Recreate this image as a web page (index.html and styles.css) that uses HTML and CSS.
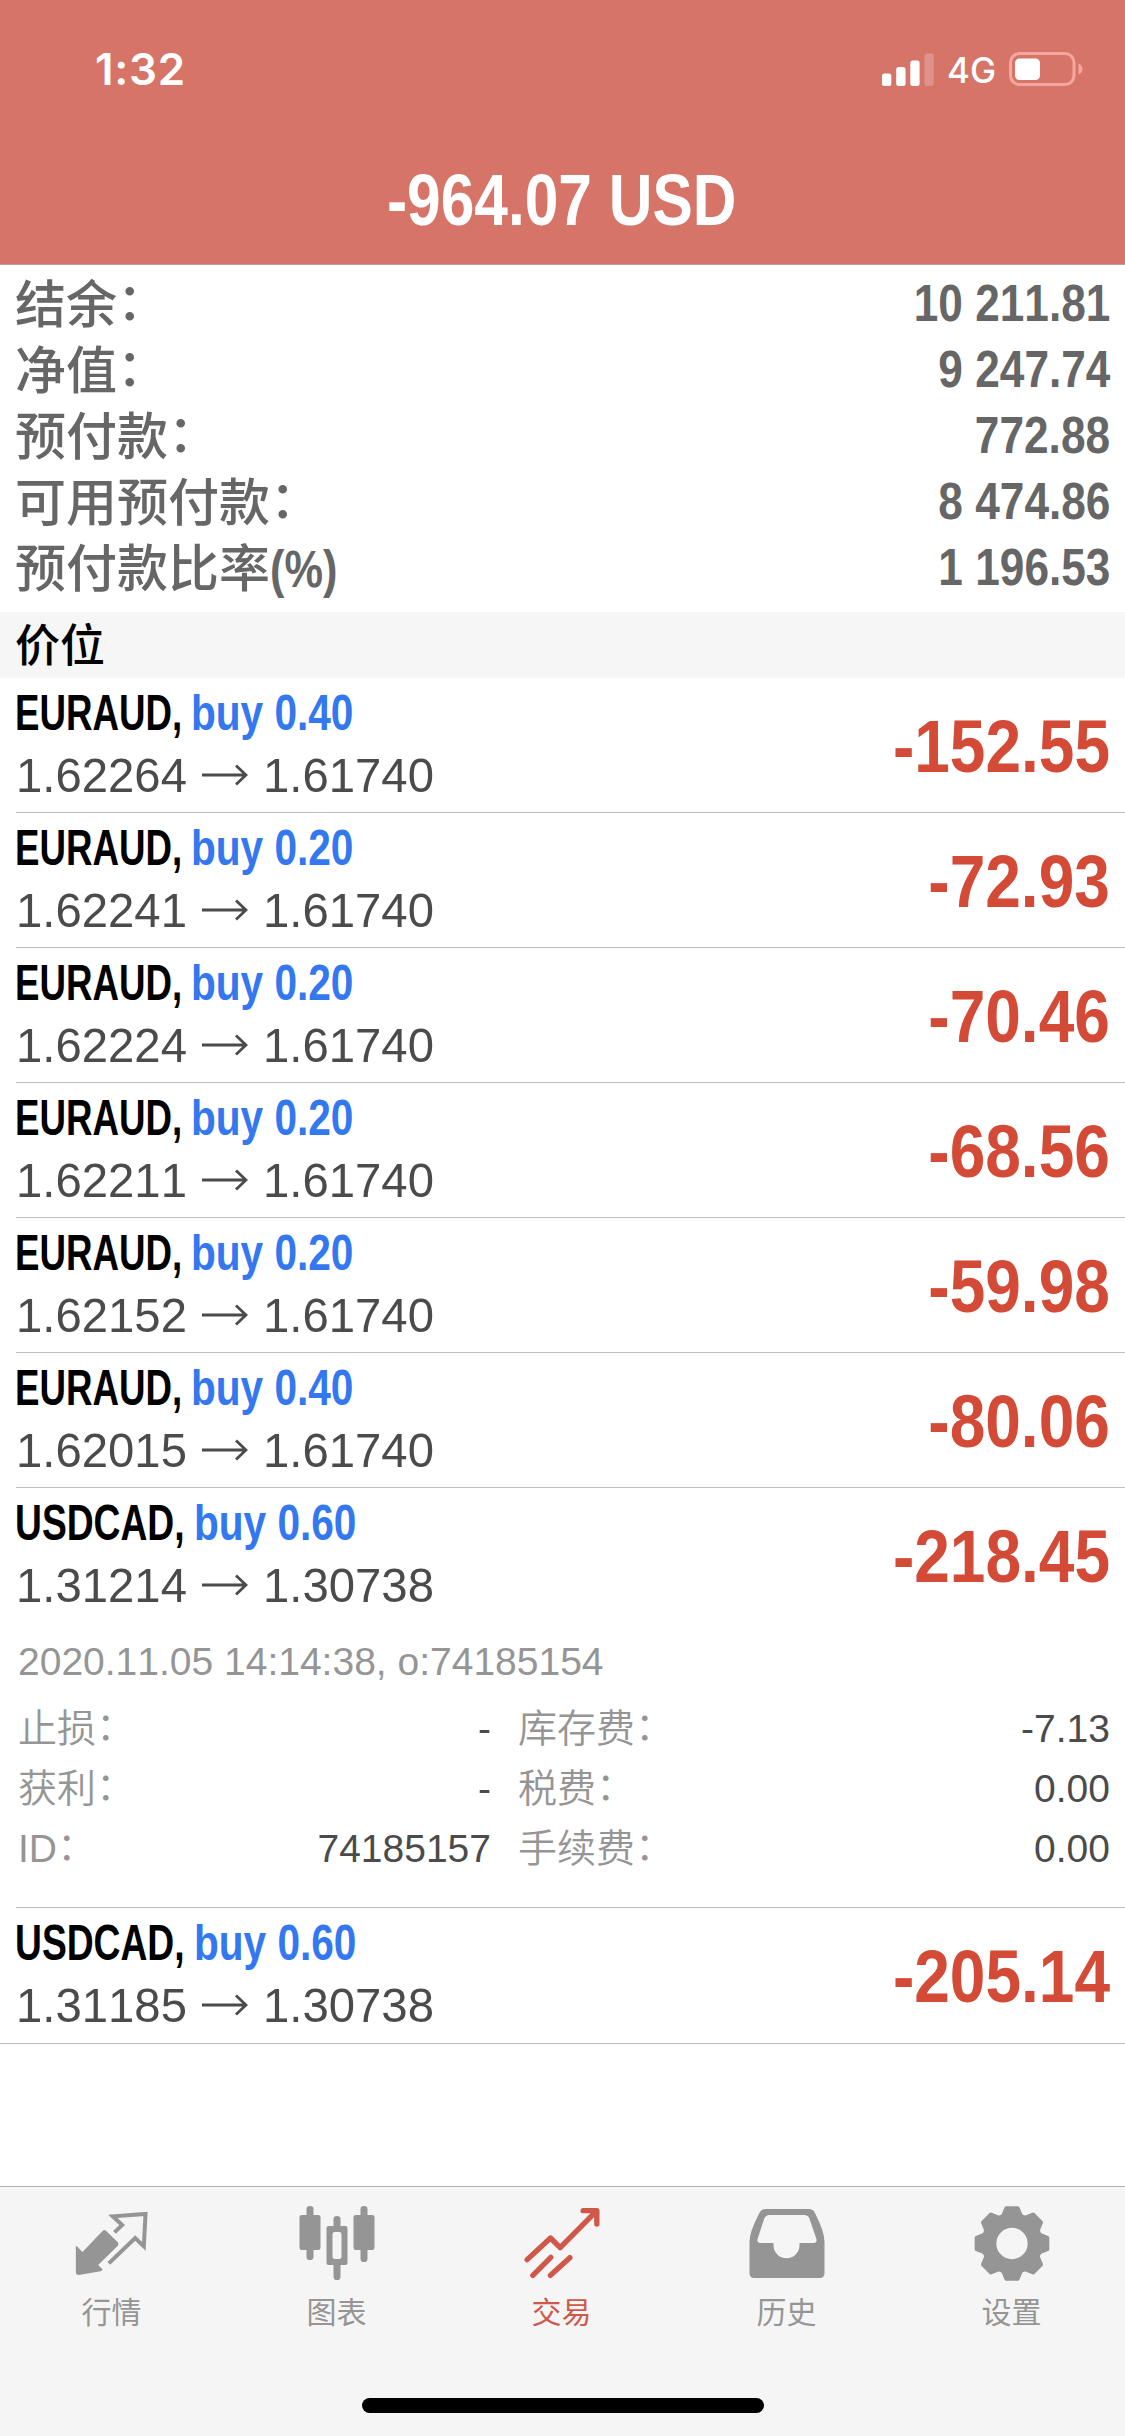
FILE: index.html
```html
<!DOCTYPE html>
<html lang="zh-CN">
<head>
<meta charset="utf-8">
<title>交易</title>
<link rel="stylesheet" href="styles.css">
</head>
<body>
<svg width="0" height="0" class="defs">
  <symbol id="arrow" viewBox="0 0 46 22"><path d="M0 11H44M34 1.500L44 11L34 20.500" fill="none" stroke="#4b4b4b" stroke-width="2.800"/></symbol>
</svg>
<div class="screen">
  <header class="header">
    <div class="status">
      <span class="time">1:32</span>
      <div class="status-right">
        <svg width="52" height="33" viewBox="0 0 52 33" fill="#fff">
          <rect x="0" y="20.500" width="9.300" height="12.500" rx="2.500"/>
          <rect x="14.200" y="14" width="9.300" height="19" rx="2.500"/>
          <rect x="28.300" y="7.500" width="9.300" height="25.500" rx="2.500"/>
          <rect x="42.400" y="0.500" width="9.300" height="32.500" rx="2.500" opacity=".22"/>
        </svg>
        <span class="network">4G</span>
        <svg width="74" height="36" viewBox="0 0 74 36">
          <rect x="1.500" y="2.500" width="63.500" height="31" rx="9" fill="none" stroke="#f3a79f" stroke-width="3"/>
          <rect x="6" y="7.500" width="25" height="21.500" rx="4.500" fill="#fff"/>
          <path d="M69.500 12.500Q73.500 14.500 73.500 18T69.500 23.500Z" fill="#f3a79f"/>
        </svg>
      </div>
    </div>
    <h1 class="title">-964.07 USD</h1>
  </header>

  <section class="summary">
    <div class="summary-row"><span class="label">结余<i class="colon">：</i></span><b class="amount">10 211.81</b></div>
    <div class="summary-row"><span class="label">净值<i class="colon">：</i></span><b class="amount">9 247.74</b></div>
    <div class="summary-row"><span class="label">预付款<i class="colon">：</i></span><b class="amount">772.88</b></div>
    <div class="summary-row"><span class="label">可用预付款<i class="colon">：</i></span><b class="amount">8 474.86</b></div>
    <div class="summary-row"><span class="label">预付款比率<b class="percent">(%)</b></span><b class="amount">1 196.53</b></div>
  </section>

  <h2 class="section-title">价位</h2>

  <main class="positions">
    <article class="position">
      <div class="deal">
        <div class="deal-name"><span class="symbol">EURAUD,</span><span class="side">buy 0.40</span></div>
        <div class="deal-price"><span class="from">1.62264</span><svg class="arrow"><use href="#arrow"/></svg><span class="to">1.61740</span></div>
      </div>
      <div class="profit">-152.55</div>
    </article>
    <article class="position">
      <div class="deal">
        <div class="deal-name"><span class="symbol">EURAUD,</span><span class="side">buy 0.20</span></div>
        <div class="deal-price"><span class="from">1.62241</span><svg class="arrow"><use href="#arrow"/></svg><span class="to">1.61740</span></div>
      </div>
      <div class="profit">-72.93</div>
    </article>
    <article class="position">
      <div class="deal">
        <div class="deal-name"><span class="symbol">EURAUD,</span><span class="side">buy 0.20</span></div>
        <div class="deal-price"><span class="from">1.62224</span><svg class="arrow"><use href="#arrow"/></svg><span class="to">1.61740</span></div>
      </div>
      <div class="profit">-70.46</div>
    </article>
    <article class="position">
      <div class="deal">
        <div class="deal-name"><span class="symbol">EURAUD,</span><span class="side">buy 0.20</span></div>
        <div class="deal-price"><span class="from">1.62211</span><svg class="arrow"><use href="#arrow"/></svg><span class="to">1.61740</span></div>
      </div>
      <div class="profit">-68.56</div>
    </article>
    <article class="position">
      <div class="deal">
        <div class="deal-name"><span class="symbol">EURAUD,</span><span class="side">buy 0.20</span></div>
        <div class="deal-price"><span class="from">1.62152</span><svg class="arrow"><use href="#arrow"/></svg><span class="to">1.61740</span></div>
      </div>
      <div class="profit">-59.98</div>
    </article>
    <article class="position">
      <div class="deal">
        <div class="deal-name"><span class="symbol">EURAUD,</span><span class="side">buy 0.40</span></div>
        <div class="deal-price"><span class="from">1.62015</span><svg class="arrow"><use href="#arrow"/></svg><span class="to">1.61740</span></div>
      </div>
      <div class="profit">-80.06</div>
    </article>
    <article class="position position--open">
      <div class="deal">
        <div class="deal-name"><span class="symbol symbol--wide">USDCAD,</span><span class="side">buy 0.60</span></div>
        <div class="deal-price"><span class="from">1.31214</span><svg class="arrow"><use href="#arrow"/></svg><span class="to">1.30738</span></div>
      </div>
      <div class="profit">-218.45</div>
    </article>
    <section class="details">
      <div class="details-date">2020.11.05 14:14:38, o:74185154</div>
      <div class="details-grid">
        <span>止损<i class="colon">：</i></span><span class="value">-</span><span class="second">库存费<i class="colon">：</i></span><span class="value">-7.13</span>
        <span>获利<i class="colon">：</i></span><span class="value">-</span><span class="second">税费<i class="colon">：</i></span><span class="value">0.00</span>
        <span class="id">ID<i class="colon">：</i></span><span class="value">74185157</span><span class="second">手续费<i class="colon">：</i></span><span class="value">0.00</span>
      </div>
    </section>
    <article class="position position--last">
      <div class="deal">
        <div class="deal-name"><span class="symbol symbol--wide">USDCAD,</span><span class="side">buy 0.60</span></div>
        <div class="deal-price"><span class="from">1.31185</span><svg class="arrow"><use href="#arrow"/></svg><span class="to">1.30738</span></div>
      </div>
      <div class="profit">-205.14</div>
    </article>
  </main>

  <footer class="footer">
    <nav class="tabs">
      <a class="tab">
        <svg class="tab-icon" viewBox="220.500 105 234 228">
          <path d="M342 187L365 165L337 139L435 132L430 229L404 204L325 280" fill="none" stroke="currentColor" stroke-width="12"/>
          <path d="M307 182Q312 178 317 183L352 217Q356 222 352 227L293 285L306 298Q306 302 300 304L235 315Q226 315 226 306V228Q230 228 234 234L246 246Z" fill="currentColor"/>
        </svg>
        <span>行情</span>
      </a>
      <a class="tab">
        <svg class="tab-icon" viewBox="895.500 105 234 228" fill="currentColor">
          <rect x="918" y="108" width="21" height="162" rx="10"/><rect x="897" y="135" width="63" height="105" rx="7"/>
          <rect x="1080" y="108" width="21" height="168" rx="10"/><rect x="1059" y="135" width="63" height="105" rx="7"/>
          <path d="M999 170V148Q999 138 1009.500 138T1020 148V170ZM999 283V320Q999 330 1009.500 330T1020 320V283Z"/>
          <path fill-rule="evenodd" d="M984 168H1035Q1041 168 1041 174V279Q1041 285 1035 285H984Q978 285 978 279V174Q978 168 984 168ZM1003 186Q996 186 996 193V260Q996 267 1003 267H1016Q1023 267 1023 260V193Q1023 186 1016 186Z"/>
        </svg>
        <span>图表</span>
      </a>
      <a class="tab tab--active">
        <svg class="tab-icon" viewBox="220.500 105 234 228" fill="none" stroke="currentColor" stroke-width="16" stroke-linecap="round" stroke-linejoin="round">
          <path d="M230 269L300 204L329 233L436 125M398 122H439V162M247 316L301 262M300 316L358 263"/>
        </svg>
        <span>交易</span>
      </a>
      <a class="tab">
        <svg class="tab-icon" viewBox="895.500 105 234 228" fill="currentColor">
          <path fill-rule="evenodd" d="M945 117H1075Q1088 117 1093 128Q1122 185 1122 215V310Q1122 324 1108 324H911Q897 324 897 310V215Q897 185 927 128Q932 117 945 117ZM957 135Q946 135 941 146L921 208Q919 219 928 219H969V226A39 39 0 0 0 1047 226V219H1091Q1100 219 1098 208L1077 146Q1073 135 1061 135Z"/>
        </svg>
        <span>历史</span>
      </a>
      <a class="tab">
        <svg class="tab-icon" viewBox="-114 -115.500 234 228" fill="currentColor">
          <circle r="69.500" fill="none" stroke="currentColor" stroke-width="45"/>
          <g stroke="currentColor" stroke-width="12" stroke-linejoin="round">
            <path id="tooth" d="M-17-106H17L27-82H-27Z"/>
            <use href="#tooth" transform="rotate(45)"/><use href="#tooth" transform="rotate(90)"/>
            <use href="#tooth" transform="rotate(135)"/><use href="#tooth" transform="rotate(180)"/>
            <use href="#tooth" transform="rotate(225)"/><use href="#tooth" transform="rotate(270)"/>
            <use href="#tooth" transform="rotate(315)"/>
          </g>
        </svg>
        <span>设置</span>
      </a>
    </nav>
    <div class="home-indicator"></div>
  </footer>
</div>
</body>
</html>
```
FILE: styles.css
```css
* { box-sizing: border-box; }

body {
  margin: 0;
  background: #fff;
  font-family: "Liberation Sans", "Noto Sans CJK SC", sans-serif;
  font-kerning: none;
}

.defs { display: block; }

.screen {
  display: flex;
  flex-direction: column;
  width: 1125px;
  height: 2436px;
  overflow: hidden;
}

/* Header */
.header {
  height: 265px;
  flex: none;
  background: #d67468;
  border-bottom: 1px solid #b9a09c;
  color: #fff;
}

.status {
  display: flex;
  justify-content: space-between;
  height: 138px;
  padding: 0 42px 0 95px;
}

.time {
  font: 600 44px/138px Inter, sans-serif;
  letter-spacing: .7px;
}

.status-right {
  display: flex;
  align-items: center;
  height: 138px;
}

.network {
  width: 48px;
  margin: 2px 14px 0 13px;
  font: 500 35px/40px Inter, sans-serif;
}

.title {
  margin: 0;
  padding-right: 2px;
  font-size: 73px;
  line-height: 123px;
  text-align: center;
  transform: scaleX(.828);
}

.colon {
  font-style: normal;
  line-height: 0;
  vertical-align: .05em;
}

/* Account summary */
.summary {
  height: 347px;
  flex: none;
  padding: 5px 15px 0;
  color: #666;
}

.summary-row {
  display: flex;
  justify-content: space-between;
  height: 66px;
  font-size: 51px;
  font-weight: 500;
  line-height: 66px;
}

.label { padding-top: 3px; }

.amount {
  font-size: 52px;
  line-height: 67px;
  transform: scaleX(.85);
  transform-origin: right;
}

.percent {
  display: inline-block;
  transform: scaleX(.85);
  transform-origin: left;
}

.section-title {
  height: 66px;
  flex: none;
  margin: 0;
  padding: 2px 0 0 15px;
  background: #f6f6f6;
  font-size: 45px;
  font-weight: 500;
  line-height: 66px;
}

/* Open positions */
.positions { flex: 1; }

.position {
  display: flex;
  justify-content: space-between;
  height: 135px;
  margin-left: 16px;
  padding-right: 15px;
  border-bottom: 1px solid #bebebe;
}

.position--open { border-bottom: 0; }

.position--last {
  height: 136px;
  margin-left: 0;
  padding-left: 16px;
}

.deal-name {
  display: flex;
  height: 68px;
  margin-left: -1px;
  font-size: 49.5px;
  font-weight: bold;
  line-height: 69px;
}

.symbol {
  width: 176px;
  white-space: nowrap;
  transform: scaleX(.741);
  transform-origin: left;
}

.symbol--wide {
  width: 179px;
  transform: scaleX(.752);
}

.side {
  color: #3478f0;
  transform: scaleX(.82);
  transform-origin: left;
}

.deal-price {
  display: flex;
  align-items: center;
  height: 58px;
  color: #4b4b4b;
  font-size: 49px;
  line-height: 58px;
}

.from,
.to {
  width: 186px;
  transform: scaleX(.965);
  transform-origin: left;
}

.arrow {
  width: 46px;
  height: 22px;
  margin-right: 15px;
}

.profit {
  padding-top: 1px;
  color: #d34a37;
  font-size: 74px;
  font-weight: bold;
  line-height: 136px;
  transform: scaleX(.865);
  transform-origin: right;
}

/* Expanded position */
.details {
  height: 285px;
  margin-left: 16px;
  padding: 1px 15px 0 2px;
  border-bottom: 1px solid #bebebe;
  color: #959595;
  font-size: 39px;
}

.details-date { line-height: 75px; }

.details-grid {
  display: grid;
  grid-template-columns: 150px 323px 173px 1fr;
  grid-auto-rows: 60px;
  line-height: 60px;
  font-weight: 350;
}

.second { padding-left: 27px; white-space: nowrap; }

.value {
  color: #4b4b4b;
  text-align: right;
}

/* Tab bar */
.footer {
  height: 250px;
  flex: none;
  background: #f5f5f5;
  border-top: 1px solid #b0b0b0;
}

.tabs {
  display: grid;
  grid-template-columns: repeat(5, 1fr);
  height: 211px;
  padding-top: 18px;
}

.tab {
  display: flex;
  flex-direction: column;
  align-items: center;
  color: #959595;
  font-size: 30px;
  line-height: 40px;
}

.tab span { margin: 12px 2px 0 0; }

.tab--active { color: #d0584b; }

.tab-icon {
  width: 78px;
  height: 76px;
}

.home-indicator {
  width: 402px;
  height: 15px;
  margin: 0 auto;
  border-radius: 8px;
  background: #000;
}
```
